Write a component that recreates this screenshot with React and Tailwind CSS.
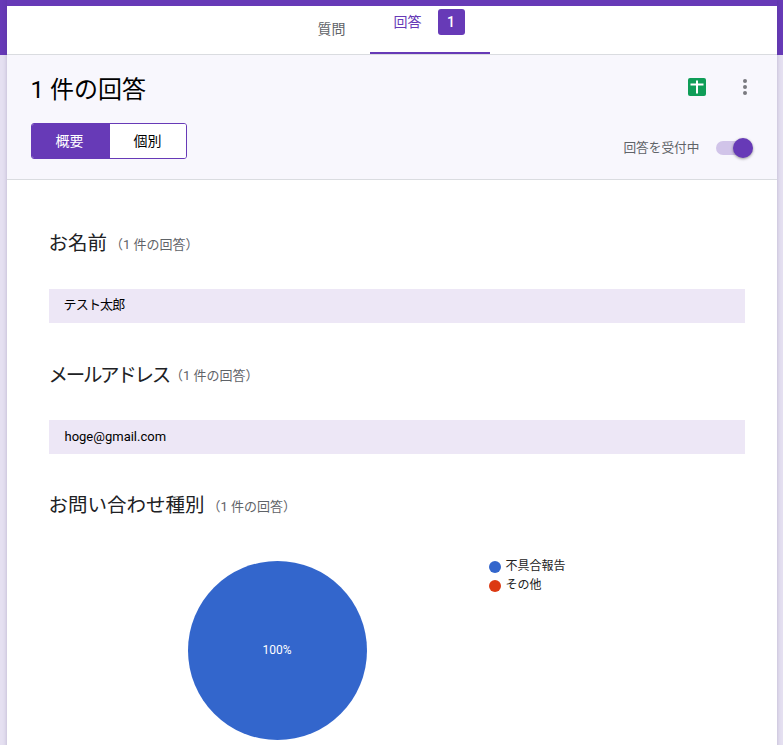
import React from 'react';

const font = "[font-family:Roboto,'Noto_Sans_CJK_JP',sans-serif]";

const Count = ({ className = 'ml-[3px]' }) => <span className={`text-[13px] tracking-normal text-[#5f6368] ${className}`}>（1 件の回答）</span>;

const Question = ({ title, value, titleClass, valueClass, countClass, className }) => (
  <section className={className}>
    <div className={`flex h-[30px] items-center text-[19.5px] leading-none text-[#202124] ${titleClass}`}>
      {title}
      <Count className={countClass} />
    </div>
    <div className={`mt-[30px] flex h-[34px] items-center bg-[#ede7f6] text-[13px] text-black ${valueClass}`}>{value}</div>
  </section>
);

const App = () => {
  return (
    <div className={`${font} relative h-[745px] w-[783px] overflow-hidden bg-[#e5e0f1]`}>
      {/* purple top behind the tabs */}
      <div className="absolute inset-x-0 top-0 h-[55px] bg-[#673ab7]" />

      <div className="relative mx-auto w-[770px] pt-1.5 shadow-[0_0_4px_rgba(60,40,100,0.25)]">
        {/* Tabs */}
        <div className="flex h-[49px] justify-center border-b border-[#dadce0] bg-white pr-[44px]">
          <div className="flex w-[120px] items-center justify-end pb-[2px] pr-[24px] text-sm text-[#5f6368]">質問</div>
          <div className="flex w-[120px] items-start border-b-2 border-[#673ab7] pl-[24px] pt-[3px] text-sm text-[#673ab7]">
            <span className="mt-[3px]">回答</span>
            <span className="ml-[16px] flex h-[26px] w-[27px] items-center justify-center rounded-[3px] bg-[#673ab7] text-sm font-medium text-white">1</span>
          </div>
        </div>

        {/* Summary header */}
        <div className="flex h-[125px] justify-between border-b border-[#dadce0] bg-[#f8f7fd] pl-6 pr-6">
          <div>
            <h1 className="mt-[20px] text-2xl font-normal leading-[30px] text-black">1 件の回答</h1>
            <div className="mt-[18px] flex h-9 w-[156px] overflow-hidden rounded-[3px] border border-[#673ab7] text-sm">
              <div className="flex w-[78px] items-center justify-center bg-[#673ab7] pr-[2px] text-white">概要</div>
              <div className="flex flex-1 items-center justify-center bg-white text-black">個別</div>
            </div>
          </div>
          <div className="flex flex-col items-end">
            <div className="mt-[23px] flex items-center gap-[37px] pr-[6px]">
              <svg viewBox="0 0 18 18" className="h-[18px] w-[18px]">
                <rect width="18" height="18" rx="2" fill="#0f9d58" />
                <path d="M8 2.5h2v3h5.5v2H10v8H8v-8H2.5v-2H8z" fill="#fff" />
              </svg>
              <svg viewBox="0 0 4 16" className="h-4 w-1">
                <circle cx="2" cy="2" r="2" fill="#7a7a80" />
                <circle cx="2" cy="8" r="2" fill="#7a7a80" />
                <circle cx="2" cy="14" r="2" fill="#7a7a80" />
              </svg>
            </div>
            <div className="mt-[42px] flex items-center pr-[3px]">
              <span className="text-[12.7px] text-[#5f6368]">回答を受付中</span>
              <div className="relative ml-[16px] h-[14px] w-[34px] rounded-full bg-[#d1c4e9]">
                <div className="absolute -right-[3px] -top-[3px] h-5 w-5 rounded-full bg-[#673ab7] shadow-[0_1px_3px_rgba(0,0,0,0.4)]" />
              </div>
            </div>
          </div>
        </div>

        {/* Responses */}
        <div className="h-[600px] bg-white pl-[42px] pr-[32px] pt-[49px]">
          <Question title="お名前" value="テスト太郎" valueClass="pb-[2px] pl-[15px] tracking-[-0.8px]" />
          <Question
            title="メールアドレス"
            value="hoge@gmail.com"
            titleClass="pt-[2px] tracking-[-2.3px]"
            valueClass="pl-[16px]"
            countClass="ml-[1px] -mt-[2px]"
            className="mt-[37px]"
          />
          <section className="mt-[37px]">
            <div className="flex h-[30px] items-center text-[19.5px] leading-none text-[#202124]">
              お問い合わせ種別
              <Count />
            </div>
            <div className="mt-[40px] flex">
              <div className="ml-[139px] flex h-[179px] w-[179px] items-center justify-center rounded-full bg-[#3366cc] pb-[2px] text-xs text-white">100%</div>
              <div className="-mt-[4px] ml-[122px] text-xs leading-[19px] text-[#222]">
                <div className="flex items-center gap-[5px]">
                  <span className="h-3 w-3 rounded-full bg-[#3366cc]" />
                  不具合報告
                </div>
                <div className="flex items-center gap-[5px]">
                  <span className="h-3 w-3 rounded-full bg-[#dc3912]" />
                  その他
                </div>
              </div>
            </div>
          </section>
        </div>
      </div>
    </div>
  );
};

export default App;
